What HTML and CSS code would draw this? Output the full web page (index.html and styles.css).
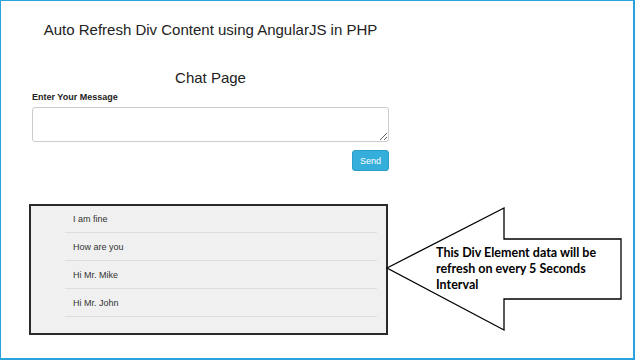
FILE: index.html
```html
<!DOCTYPE html>
<html lang="en">
<head>
    <meta charset="UTF-8">
    <meta name="viewport" content="width=device-width, initial-scale=1.0">
    <title>Auto Refresh Div Content</title>
    <link rel="stylesheet" href="styles.css">
</head>
<body>
    <div class="frame">
        <div class="page">
            <h3 class="title">Auto Refresh Div Content using AngularJS in PHP</h3>
            <h3 class="chat-title">Chat Page</h3>
            <form class="chat-form">
                <label for="message">Enter Your Message</label>
                <textarea id="message" class="form-control"></textarea>
                <div class="actions">
                    <button type="button" class="btn-send">Send</button>
                </div>
            </form>
            <div class="chat-box">
                <ul class="messages">
                    <li>I am fine</li>
                    <li>How are you</li>
                    <li>Hi Mr. Mike</li>
                    <li>Hi Mr. John</li>
                </ul>
            </div>
        </div>

        <!-- callout drawn over the screenshot -->
        <div class="callout">
            <svg width="250" height="140" viewBox="0 0 250 140">
                <polygon points="7,68 124,8 124,39 241,39 241,99 124,99 124,130"
                         fill="#fff" stroke="#000" stroke-width="1.3" />
            </svg>
            <p class="callout-text">This Div Element data will be refresh on every 5 Seconds Interval</p>
        </div>
    </div>
</body>
</html>
```

FILE: styles.css
```css
body {
    margin: 0;
    padding: 0;
    font-family: "Liberation Sans", Arial, sans-serif;
    color: #333;
    background: #fff;
}
.frame {
    position: relative;
    width: 635px;
    height: 360px;
    box-sizing: border-box;
    border-style: solid;
    border-color: #29a3dc;
    border-width: 1px 2px 2px 1px;
    overflow: hidden;
}
.page {
    width: 357px;
    margin-left: 31px;
}
.title {
    margin: 0;
    padding-top: 20px;
    font-size: 15px;
    font-weight: normal;
    line-height: 17px;
    text-align: center;
    color: #222;
}
.chat-title {
    margin: 0;
    padding-top: 31px;
    font-size: 15px;
    font-weight: normal;
    line-height: 17px;
    text-align: center;
    color: #222;
}
.chat-form {
    margin-top: 6px;
}
.chat-form label {
    display: block;
    font-size: 9px;
    font-weight: bold;
    line-height: 11px;
    color: #222;
}
.form-control {
    display: block;
    width: 100%;
    height: 35px;
    margin-top: 4px;
    box-sizing: border-box;
    border: 1px solid #ccc;
    border-radius: 3px;
    resize: vertical;
    font-family: inherit;
}
.actions {
    display: flex;
    justify-content: flex-end;
    margin-top: 8px;
}
.btn-send {
    width: 37px;
    height: 21px;
    padding: 0;
    font-family: inherit;
    font-size: 9px;
    color: #fff;
    background-color: #35aedb;
    border: 1px solid #2a9dc8;
    border-radius: 3px;
}
.chat-box {
    width: 359px;
    height: 131px;
    margin-top: 33px;
    margin-left: -3px;
    box-sizing: border-box;
    background: #f0f0f0;
    border: 2px solid #2a2a2a;
}
.messages {
    list-style: none;
    margin: 0 9px 0 34px;
    padding: 0;
}
.messages li {
    padding: 8px 8px 7px;
    font-size: 9px;
    line-height: 12px;
    color: #333;
    border-bottom: 1px solid #dedede;
}
.messages li:first-child {
    padding-top: 7px;
}
.callout {
    position: absolute;
    left: 379px;
    top: 199px;
    width: 250px;
    height: 140px;
}
.callout svg {
    display: block;
}
.callout-text {
    position: absolute;
    left: 56px;
    top: 45px;
    width: 175px;
    margin: 0;
    font-family: Lato, "Noto Sans", sans-serif;
    font-weight: bold;
    font-size: 12.5px;
    line-height: 16px;
    color: #000;
}
```
